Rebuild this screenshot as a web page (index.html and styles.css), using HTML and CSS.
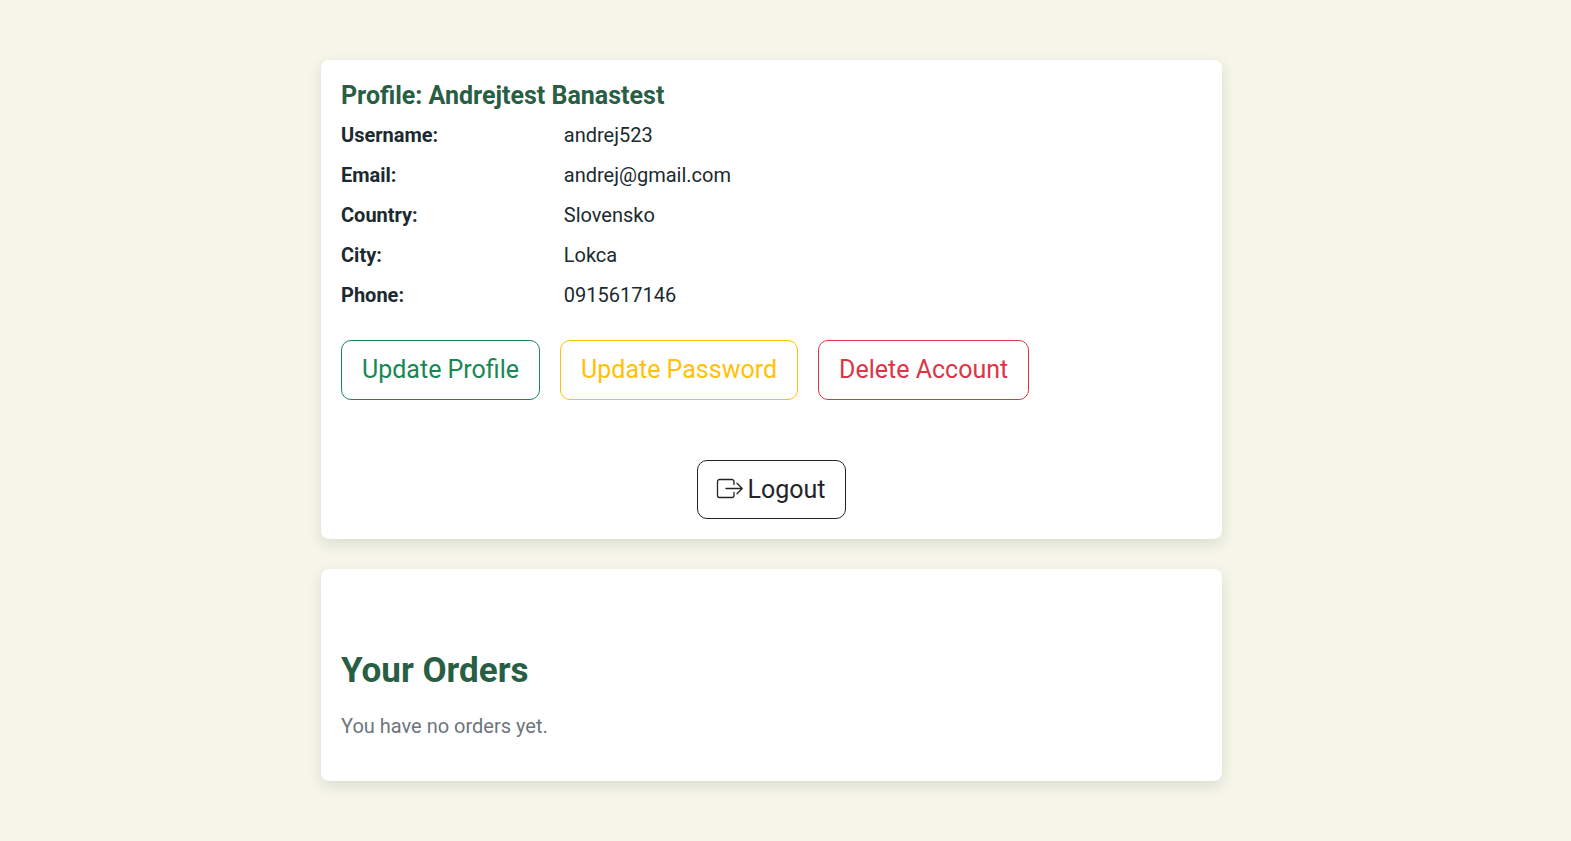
FILE: index.html
```html
<!DOCTYPE html>
<html lang="en">
<head>
<meta charset="utf-8">
<meta name="viewport" content="width=device-width, initial-scale=1">
<title>Profile</title>
<link rel="stylesheet" href="styles.css">
</head>
<body>
<main class="page">
  <section class="card">
    <h2 class="card-title">Profile: Andrejtest Banastest</h2>
    <dl class="details">
      <dt>Username:</dt><dd>andrej523</dd>
      <dt>Email:</dt><dd>andrej@gmail.com</dd>
      <dt>Country:</dt><dd>Slovensko</dd>
      <dt>City:</dt><dd>Lokca</dd>
      <dt>Phone:</dt><dd>0915617146</dd>
    </dl>
    <div class="actions">
      <button type="button" class="btn btn-success">Update Profile</button>
      <button type="button" class="btn btn-warning">Update Password</button>
      <button type="button" class="btn btn-danger">Delete Account</button>
    </div>
    <div class="logout">
      <button type="button" class="btn btn-dark">
        <svg class="icon" viewBox="0 0 26 24" aria-hidden="true"><path d="M16 6.5V3.5a2 2 0 0 0-2-2H1.5a2 2 0 0 0-2 2v14a2 2 0 0 0 2 2H14a2 2 0 0 0 2-2v-3M8 10.5h16.2M19 5.3l5.2 5.2-5.2 5.2"/></svg>
        Logout
      </button>
    </div>
  </section>
  <section class="card">
    <h1 class="orders-title">Your Orders</h1>
    <p class="empty">You have no orders yet.</p>
  </section>
</main>
</body>
</html>
```
FILE: styles.css
```css
* {
  box-sizing: border-box;
}

body {
  margin: 0;
  background: #f5f5e9;
  color: #1b2a2f;
  font: 20px/30px Roboto, sans-serif;
}

.page {
  display: flex;
  flex-direction: column;
  align-items: center;
  gap: 30px;
  padding: 60px 28px 60px 0;
}

.card {
  width: 100%;
  max-width: 901px;
  padding: 20px;
  border-radius: 8px;
  background: #fff;
  box-shadow: 0 5px 13px rgba(40, 80, 50, 0.13);
}

.card-title {
  margin: 0 0 8px;
  color: #285e43;
  font-size: 25px;
  line-height: 32px;
  font-weight: 700;
}

.details {
  display: grid;
  grid-template-columns: 1fr 3fr;
  gap: 10px 0;
  margin: 0 -30px 30px 0;
}

.details dt {
  font-weight: 700;
}

.details dd {
  margin: 0;
}

.actions {
  display: flex;
  flex-wrap: wrap;
  gap: 20px;
}

.logout {
  display: flex;
  justify-content: center;
  margin-top: 60px;
}

.btn {
  display: flex;
  align-items: center;
  gap: 4px;
  padding: 10px 20px;
  border: 1px solid currentColor;
  border-radius: 10px;
  background: transparent;
  font: 25px/38px Roboto, sans-serif;
  cursor: pointer;
}

.btn-success {
  color: #198754;
}

.btn-warning {
  color: #ffc107;
}

.btn-danger {
  color: #dc3545;
}

.btn-dark {
  color: #212529;
  line-height: 37px;
}

.icon {
  width: 26px;
  height: 24px;
  overflow: visible;
  fill: none;
  stroke: currentColor;
  stroke-width: 1.3;
  stroke-linecap: round;
  stroke-linejoin: round;
}

.orders-title {
  margin: 60px 0 18px;
  color: #285e43;
  font-size: 35px;
  line-height: 44px;
  font-weight: 700;
}

.empty {
  margin: 0 0 20px;
  color: #6c757d;
}
```
